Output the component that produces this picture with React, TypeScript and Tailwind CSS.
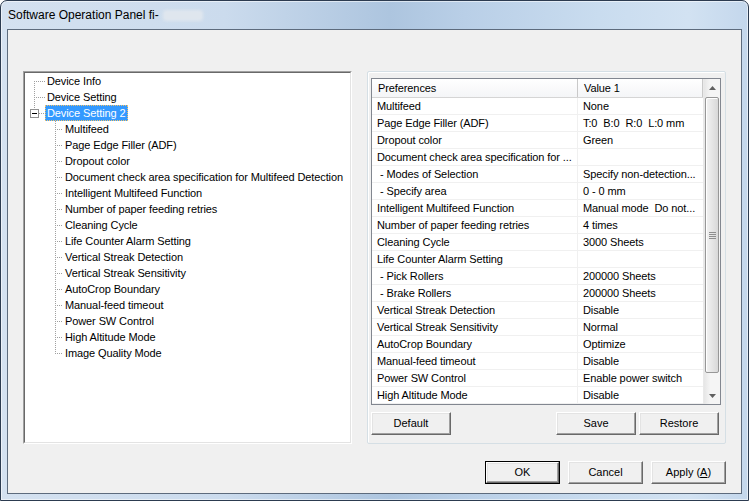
import React from "react";

const treeChildren = [
  "Multifeed",
  "Page Edge Filler (ADF)",
  "Dropout color",
  "Document check area specification for Multifeed Detection",
  "Intelligent Multifeed Function",
  "Number of paper feeding retries",
  "Cleaning Cycle",
  "Life Counter Alarm Setting",
  "Vertical Streak Detection",
  "Vertical Streak Sensitivity",
  "AutoCrop Boundary",
  "Manual-feed timeout",
  "Power SW Control",
  "High Altitude Mode",
  "Image Quality Mode",
];

const rows: [string, string][] = [
  ["Multifeed", "None"],
  ["Page Edge Filler (ADF)", "T:0  B:0  R:0  L:0 mm"],
  ["Dropout color", "Green"],
  ["Document check area specification for ...", ""],
  [" - Modes of Selection", "Specify non-detection..."],
  [" - Specify area", "0 - 0 mm"],
  ["Intelligent Multifeed Function", "Manual mode  Do not..."],
  ["Number of paper feeding retries", "4 times"],
  ["Cleaning Cycle", "3000 Sheets"],
  ["Life Counter Alarm Setting", ""],
  [" - Pick Rollers", "200000 Sheets"],
  [" - Brake Rollers", "200000 Sheets"],
  ["Vertical Streak Detection", "Disable"],
  ["Vertical Streak Sensitivity", "Normal"],
  ["AutoCrop Boundary", "Optimize"],
  ["Manual-feed timeout", "Disable"],
  ["Power SW Control", "Enable power switch"],
  ["High Altitude Mode", "Disable"],
];

const DOT = { stroke: "#a0a0a0", strokeWidth: 1, strokeDasharray: "1 1" };

function RootGutter({ kind }: { kind: 0 | 1 | 2 }) {
  return (
    <svg width="20" height="16" className="shrink-0" shapeRendering="crispEdges">
      {kind === 0 && <line x1="9.5" y1="8" x2="9.5" y2="16" {...DOT} />}
      {kind === 1 && <line x1="9.5" y1="0" x2="9.5" y2="16" {...DOT} />}
      {kind === 2 && <line x1="9.5" y1="0" x2="9.5" y2="4" {...DOT} />}
      {kind === 2 ? (
        <>
          <rect x="5.5" y="4.5" width="8" height="8" fill="#fff" stroke="#919191" strokeWidth="1" />
          <line x1="7" y1="8.5" x2="12" y2="8.5" stroke="#000" strokeWidth="1" />
          <line x1="14" y1="8.5" x2="20" y2="8.5" {...DOT} />
        </>
      ) : (
        <line x1="11" y1="8.5" x2="20" y2="8.5" {...DOT} />
      )}
    </svg>
  );
}

function ChildGutter({ last }: { last: boolean }) {
  return (
    <svg width="38" height="16" className="shrink-0" shapeRendering="crispEdges">
      <line x1="30.5" y1="0" x2="30.5" y2={last ? 9 : 16} {...DOT} />
      <line x1="32" y1="8.5" x2="38" y2="8.5" {...DOT} />
    </svg>
  );
}

function ClassicButton({
  children,
  w,
  isDefault,
}: {
  children: React.ReactNode;
  w: string;
  isDefault?: boolean;
}) {
  const inner = (
    <div className="h-full w-full border border-t-white border-l-white border-b-[#696969] border-r-[#696969] bg-[#f0f0f0] shadow-[inset_-1px_-1px_0_#a0a0a0,inset_1px_1px_0_#e3e3e3] flex items-center justify-center text-[11px] text-black">
      {children}
    </div>
  );
  return isDefault ? (
    <div className={`${w} h-[23px] border border-black`}>{inner}</div>
  ) : (
    <div className={`${w} h-[23px]`}>{inner}</div>
  );
}

export default function App() {
  return (
    <div className="w-[749px] h-[501px] overflow-hidden bg-white font-['Liberation_Sans',Arial,sans-serif]">
      <div className="w-full h-full rounded-t-[7px] border border-[#2c3b50] bg-[linear-gradient(90deg,#d4e1f0_0%,#cbdbed_30%,#adc5df_52%,#b9cfe7_62%,#c9dcef_80%,#d2e2f2_92%,#c4d7ec_100%)] shadow-[inset_0_0_0_1px_rgba(255,255,255,0.55)] flex flex-col">
        {/* Title bar */}
        <div className="h-[28px] shrink-0 flex items-center pl-[7px]">
          <span className="text-[12px] text-black leading-none">Software Operation Panel fi-</span>
          <span className="ml-[4px] w-[40px] h-[11px] rounded-[3px] bg-[#dfe6ee] blur-[1.5px]" />
        </div>

        {/* Client area */}
        <div className="flex-1 px-[6px] pb-[6px] min-h-0">
          <div className="h-full border border-[#5d6b7d] bg-[#f0f0f0] flex flex-col">
            <div className="flex pl-[15px] pt-[41px] gap-[15px]">
              {/* Tree */}
              <div className="w-[329px] h-[373px] border border-t-[#a0a0a0] border-l-[#a0a0a0] border-b-white border-r-white">
                <div className="h-full w-full border border-t-[#696969] border-l-[#696969] border-b-[#e3e3e3] border-r-[#e3e3e3] bg-white text-[11px] tracking-[-0.1px] text-black">
                  {(["Device Info", "Device Setting", "Device Setting 2"] as const).map((t, i) => (
                    <div key={t} className="h-[16px] flex items-center">
                      <RootGutter kind={i as 0 | 1 | 2} />
                      {i === 2 ? (
                        <span className="h-[16px] px-[1px] flex items-center bg-[#3399ff] text-white border border-dotted border-[#f3c26a]">
                          {t}
                        </span>
                      ) : (
                        <span className="px-[2px] whitespace-nowrap">{t}</span>
                      )}
                    </div>
                  ))}
                  {treeChildren.map((t, i) => (
                    <div key={t} className="h-[16px] flex items-center">
                      <ChildGutter last={i === treeChildren.length - 1} />
                      <span className="px-[2px] whitespace-nowrap">{t}</span>
                    </div>
                  ))}
                </div>
              </div>

              {/* Right panel */}
              <div className="w-[359px] h-[373px] border border-[#d5dfe5] rounded-[2px] shadow-[inset_1px_1px_0_#fff] pl-[3px] pt-[6px] flex flex-col">
                <div className="w-[350px] h-[327px] border border-[#828790] bg-white flex text-[11px] tracking-[-0.1px] text-black">
                  <div className="w-[331px] flex flex-col">
                    <div className="h-[19px] flex bg-[linear-gradient(#ffffff,#f4f5f7)] border-b border-[#d5d5d5]">
                      <div className="w-[206px] border-r border-[#c9c9c9] pl-[6px] flex items-center">Preferences</div>
                      <div className="flex-1 border-r border-[#c9c9c9] pl-[6px] flex items-center">Value 1</div>
                    </div>
                    {rows.map(([a, b], i) => (
                      <div key={i} className="h-[17px] flex border-b border-[#f0f0f0]">
                        <div className="w-[206px] border-r border-[#f0f0f0] pl-[5px] pt-[1px] flex items-center whitespace-pre overflow-hidden">
                          {a}
                        </div>
                        <div className="flex-1 pl-[5px] pt-[1px] flex items-center whitespace-pre overflow-hidden">{b}</div>
                      </div>
                    ))}
                  </div>
                  {/* Scrollbar */}
                  <div className="w-[17px] flex flex-col bg-[linear-gradient(90deg,#e6e6e6,#f5f5f5_40%,#f5f5f5)] border-l border-[#e9e9e9]">
                    <div className="h-[17px] flex items-center justify-center">
                      <svg width="7" height="4" viewBox="0 0 7 4">
                        <path d="M3.5 0 L7 4 L0 4 Z" fill="#606060" />
                      </svg>
                    </div>
                    <div className="flex-1 px-[1px] pt-[1px]">
                      <div className="h-[276px] rounded-[2px] border border-[#979797] bg-[linear-gradient(90deg,#f2f2f2,#e6e6e6_50%,#d8d8d8)] shadow-[inset_1px_1px_0_#fff] flex items-center justify-center">
                        <div className="flex flex-col gap-[1px]">
                          <div className="w-[7px] h-[1px] bg-[#8e8e8e]" />
                          <div className="w-[7px] h-[1px] bg-[#8e8e8e]" />
                          <div className="w-[7px] h-[1px] bg-[#8e8e8e]" />
                          <div className="w-[7px] h-[1px] bg-[#8e8e8e]" />
                        </div>
                      </div>
                    </div>
                    <div className="h-[17px] flex items-center justify-center">
                      <svg width="7" height="4" viewBox="0 0 7 4">
                        <path d="M0 0 L7 0 L3.5 4 Z" fill="#606060" />
                      </svg>
                    </div>
                  </div>
                </div>
                <div className="mt-[7px] flex pr-[6px]">
                  <ClassicButton w="w-[80px]">Default</ClassicButton>
                  <div className="flex-1" />
                  <div className="flex gap-[3px]">
                    <ClassicButton w="w-[80px]">Save</ClassicButton>
                    <ClassicButton w="w-[80px]">Restore</ClassicButton>
                  </div>
                </div>
              </div>
            </div>

            {/* Bottom buttons */}
            <div className="mt-[17px] flex justify-end pr-[15px] gap-[8px]">
              <ClassicButton w="w-[75px]" isDefault>
                OK
              </ClassicButton>
              <ClassicButton w="w-[75px]">Cancel</ClassicButton>
              <ClassicButton w="w-[75px]">
                <span>
                  Apply (<u>A</u>)
                </span>
              </ClassicButton>
            </div>
          </div>
        </div>
      </div>
    </div>
  );
}
